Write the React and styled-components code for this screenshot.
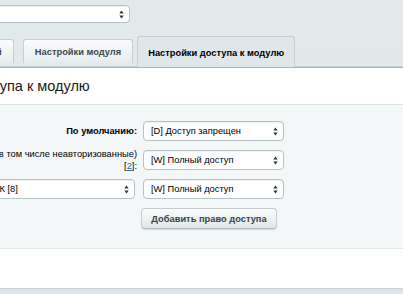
import React from 'react'
import styled, { createGlobalStyle } from 'styled-components'

const GlobalStyle = createGlobalStyle`
  html, body {
    margin: 0;
    padding: 0;
    background: #dee6e9;
    overflow: hidden;
  }
  body {
    font-family: "Liberation Sans", Arial, sans-serif;
  }
`

const Page = styled.div`
  width: 603px;
  margin-left: -200px;
  height: 294px;
  background: linear-gradient(#e3eaec, #dde5e8);
`

const TopBar = styled.div`
  padding: 5px 0 0 50px;
  height: 31px;
`

const Tabs = styled.div`
  display: flex;
  align-items: flex-end;
  padding-left: ${p => p.$offset}px;
  height: 31px;
`

const Tab = styled.div`
  box-sizing: border-box;
  height: ${p => (p.$active ? 31 : 24)}px;
  margin-bottom: ${p => (p.$active ? 0 : 4)}px;
  margin-right: ${p => (p.$active ? 0 : 4)}px;
  margin-left: ${p => (p.$first || p.$active ? 0 : 5)}px;
  padding: ${p => (p.$active ? '1px 10px 0' : '0 11px')};
  display: flex;
  align-items: center;
  font-size: 9.3px;
  font-weight: bold;
  white-space: nowrap;
  color: ${p => (p.$active ? '#000' : '#3d4a4f')};
  border: 1px solid #c6ced1;
  border-bottom: none;
  border-radius: 3px 3px 0 0;
  background: ${p => (p.$active ? '#dfe7ea' : 'linear-gradient(#fbfcfc, #e6ecee)')};
`

const Panel = styled.div`
  border-top: 1px solid #a9b4b8;
  border-bottom: 1px solid #cbd3d6;
  background: #fff;
  box-shadow: 0 -1px 0 #c7d0d3;
`

const Heading = styled.div`
  height: 37px;
  box-sizing: border-box;
  padding-left: ${p => p.$offset}px;
  display: flex;
  align-items: center;
  font-size: 14.5px;
  color: #1a1a1a;
  border-bottom: 1px solid #dbe2e4;
  white-space: nowrap;
`

const Form = styled.div`
  background: #f4f7f8;
  padding: 16px 0 20px;
  display: grid;
  grid-template-columns: 337px 141px;
  grid-auto-rows: 20px;
  column-gap: 6px;
  row-gap: 9px;
  border-bottom: 1px solid #e4e9eb;
`

const Label = styled.div`
  justify-self: end;
  align-self: center;
  text-align: right;
  font-size: 9.3px;
  line-height: 12px;
  font-weight: ${p => (p.$bold ? 'bold' : 'normal')};
  color: #000;
  white-space: nowrap;
`

const Link = styled.a`
  color: #2168b5;
  text-decoration: underline;
`

const SelectBox = styled.div`
  box-sizing: border-box;
  width: ${p => p.$width || 141}px;
  height: ${p => p.$height || 20}px;
  justify-self: ${p => p.$justify || 'start'};
  margin-right: ${p => p.$mr || 0}px;
  display: flex;
  align-items: center;
  padding: 0 5px 0 7px;
  background: #fff;
  border: 1px solid #b8c1c4;
  border-radius: 4px;
  box-shadow: inset 0 1px 1px rgba(0, 0, 0, 0.06);
  font-size: 9.3px;
  color: #000;
  white-space: nowrap;
  overflow: hidden;
`

const SelectText = styled.span`
  flex: 1;
  overflow: hidden;
  text-align: left;
`

const Arrows = () => (
  <svg width="5" height="9" viewBox="0 0 5 9">
    <path d="M2.5 0.5 L4.7 3.6 H0.3 Z" fill="#333" />
    <path d="M2.5 8.5 L4.7 5.4 H0.3 Z" fill="#333" />
  </svg>
)

const Select = ({ children, ...rest }) => (
  <SelectBox {...rest}>
    <SelectText>{children}</SelectText>
    <Arrows />
  </SelectBox>
)

const Button = styled.button`
  box-sizing: border-box;
  width: 136px;
  height: 21px;
  margin-left: -2px;
  border: 1px solid #c4ccd0;
  border-bottom-color: #b3bcc0;
  border-radius: 4px;
  background: linear-gradient(#fbfcfc, #e0e7e9);
  box-shadow: 0 1px 1px rgba(0, 0, 0, 0.12);
  font-family: "Liberation Sans", Arial, sans-serif;
  font-size: 9.3px;
  font-weight: bold;
  color: #3a4448;
  padding: 0;
`

const Footer = styled.div`
  height: 39px;
  background: #fff;
`

export default function App() {
  return (
    <>
      <GlobalStyle />
      <Page>
        <TopBar>
          <Select $width={280} $height={18} />
        </TopBar>
        <Tabs $offset={114}>
          <Tab $first>Описание полей</Tab>
          <Tab>Настройки модуля</Tab>
          <Tab $active>Настройки доступа к модулю</Tab>
        </Tabs>
        <Panel>
          <Heading $offset={94}>Настройки доступа к модулю</Heading>
          <Form>
            <Label $bold>По умолчанию:</Label>
            <Select>[D] Доступ запрещен</Select>
            <Label>
              Все пользователи (в том числе неавторизованные)
              <br />
              [<Link>2</Link>]:
            </Label>
            <Select>[W] Полный доступ</Select>
            <Select $width={226} $justify="end" $mr={2}>
              Администраторы ВК [8]
            </Select>
            <Select>[W] Полный доступ</Select>
            <div />
            <Button>Добавить право доступа</Button>
          </Form>
          <Footer />
        </Panel>
      </Page>
    </>
  )
}
